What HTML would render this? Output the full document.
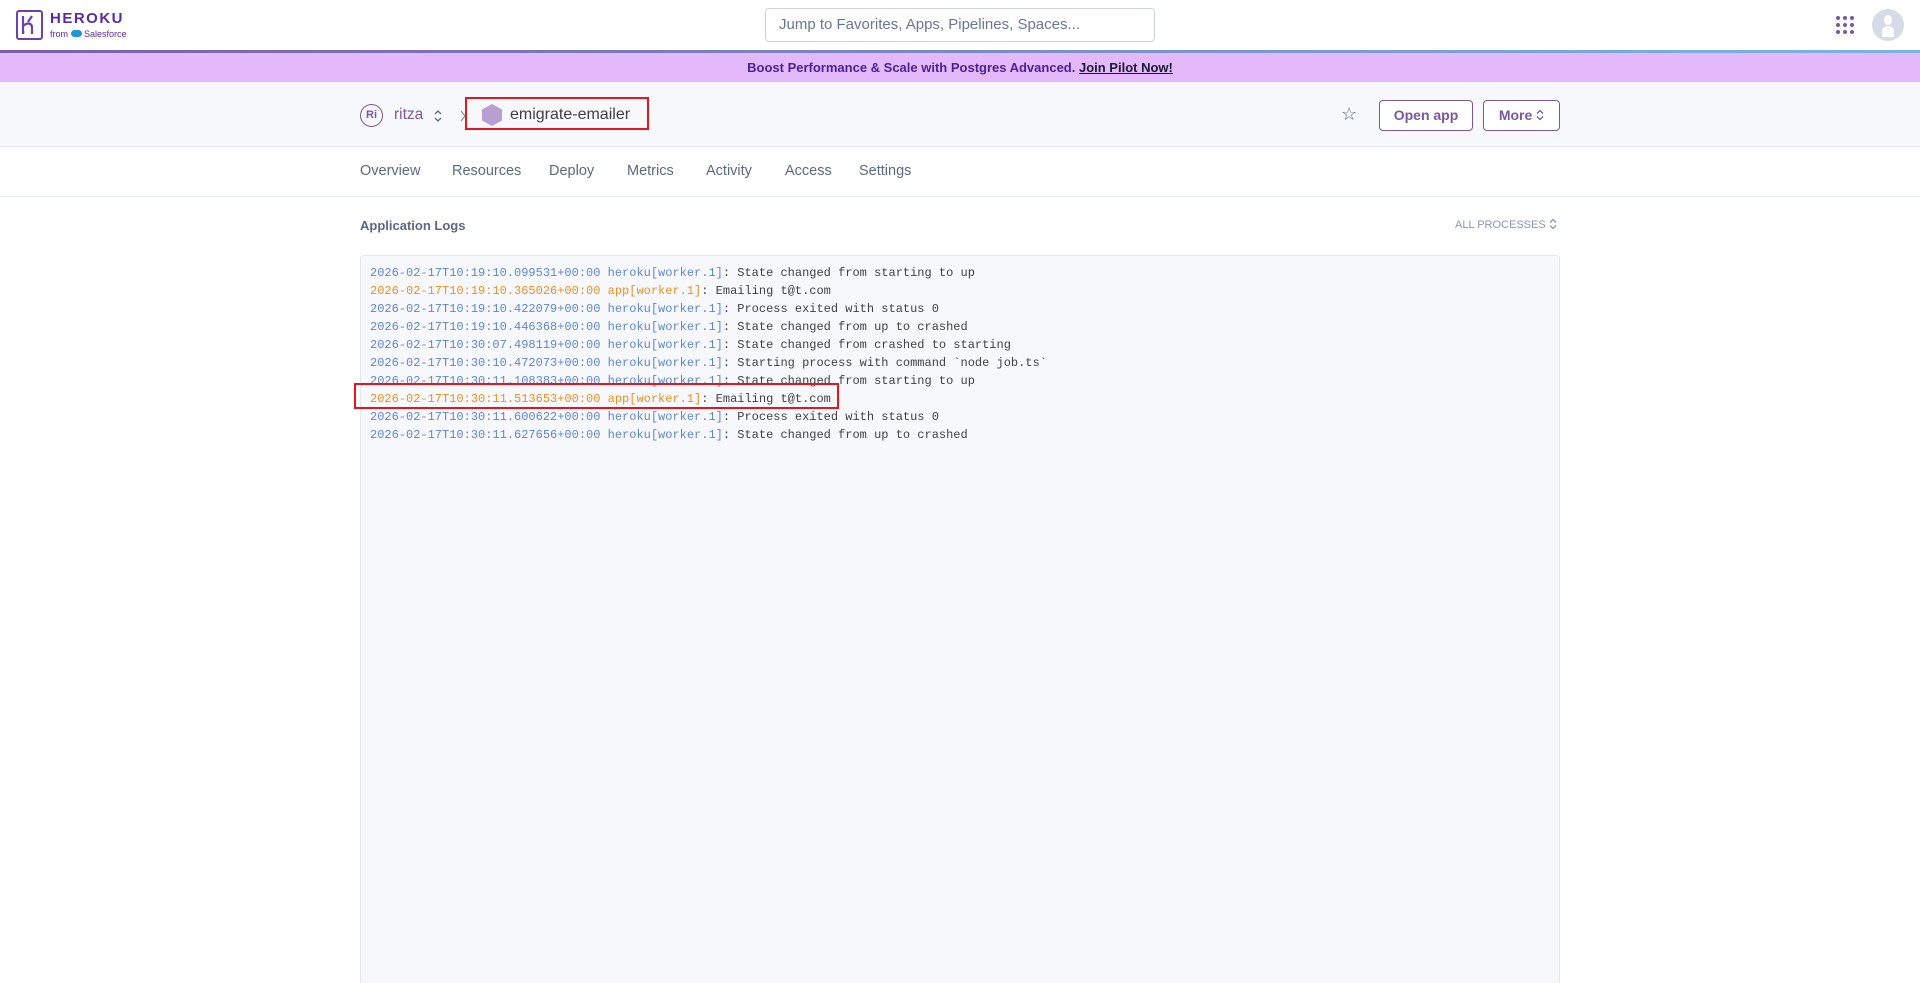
<!DOCTYPE html>
<html><head><meta charset="utf-8"><style>
*{box-sizing:border-box;margin:0;padding:0}
html{width:1920px;height:983px;overflow:hidden}
body{width:1920px;height:983px;overflow:hidden;background:#fff;font-family:"Liberation Sans",sans-serif;position:relative}
.abs{position:absolute}
.hdr{top:0;left:0;width:1920px;height:50px;background:#fff}
.grad{top:50px;left:0;width:1920px;height:3px;background:linear-gradient(90deg,#7b5ea7,#79b7e0)}
.banner{top:53px;left:0;width:1920px;height:29px;background:#e3b9fc;text-align:center;font-size:13px;font-weight:bold;color:#4b1f96;line-height:29px}
.banner u{color:#1a1a2e}
.apph{top:82px;left:0;width:1920px;height:65px;background:#f7f8fb;border-bottom:1px solid #e3e7ef}
.nav{top:147px;left:0;width:1920px;height:50px;border-bottom:1px solid #e3e7ef}
.tab{top:163px;font-size:14.5px;color:#596981}
.logline{font-family:"Liberation Mono",monospace;font-size:12px;color:#3f4148;white-space:pre;height:18px;line-height:18px}
.b{color:#5e86d6}.o{color:#ef8f1e}
.btn{top:100px;height:31px;border:1px solid #79589f;border-radius:4px;background:#fff;color:#79589f;font-size:14px;font-weight:bold;text-align:center;line-height:29px}
</style></head><body>
<div class="abs hdr"></div>
<div class="abs" style="left:16px;top:10px;width:27px;height:30px;border:2px solid #6b3fb5;border-radius:3px"></div>
<svg class="abs" style="left:16px;top:10px" width="27" height="30"><path d="M7 6v18M7 16c5-4 9-3 9 2v6M16 6l-4 6" stroke="#6b3fb5" stroke-width="2.2" fill="none"/><path d="M6 20l3 2-3 2z" fill="#6b3fb5"/></svg>
<div class="abs" style="left:50px;top:10px;font-size:15px;font-weight:bold;color:#5a2aa6;letter-spacing:1.5px">HEROKU</div>
<div class="abs" style="left:50px;top:29px;font-size:9px;color:#5a2aa6">from <span style="display:inline-block;width:11px;height:7px;background:#1b96d9;border-radius:4px"></span> Salesforce</div>
<div class="abs" style="left:765px;top:8px;width:390px;height:34px;border:1px solid #ccd3e0;border-radius:4px;font-size:15px;color:#69788e;padding-left:13px;line-height:32px">Jump to Favorites, Apps, Pipelines, Spaces...</div>
<svg class="abs" style="left:1835px;top:15px" width="20" height="20"><g fill="#79589f"><circle cx="3" cy="3" r="2"/><circle cx="10" cy="3" r="2"/><circle cx="17" cy="3" r="2"/><circle cx="3" cy="10" r="2"/><circle cx="10" cy="10" r="2"/><circle cx="17" cy="10" r="2"/><circle cx="3" cy="17" r="2"/><circle cx="10" cy="17" r="2"/><circle cx="17" cy="17" r="2"/></g></svg>
<div class="abs" style="left:1872px;top:9px;width:32px;height:32px;border-radius:50%;background:#d6dbe6"></div>
<svg class="abs" style="left:1872px;top:9px" width="32" height="32"><path d="M10 28v-6c0-3 3-5 6-5s6 2 6 5v6z M12 11c0-3 2-5 4-5s4 2 4 5-2 5-4 5-4-2-4-5z" fill="#fff"/></svg>
<div class="abs grad"></div>
<div class="abs banner">Boost Performance &amp; Scale with Postgres Advanced. <u>Join Pilot Now!</u></div>
<div class="abs apph"></div>
<div class="abs" style="left:360px;top:104px;width:23px;height:23px;border:1px solid #79589f;border-radius:50%;font-size:11px;font-weight:bold;color:#79589f;text-align:center;line-height:21px">Ri</div>
<div class="abs" style="left:394px;top:106px;font-size:15.5px;color:#79589f">ritza</div>
<svg class="abs" style="left:433px;top:109px" width="10" height="14"><path d="M2 5l3-3 3 3M2 9l3 3 3-3" stroke="#596981" stroke-width="1.3" fill="none"/></svg>
<svg class="abs" style="left:459px;top:110px" width="8" height="12"><path d="M2 1l4 5-4 5" stroke="#8a97aa" stroke-width="1.3" fill="none"/></svg>
<svg class="abs" style="left:481px;top:103px" width="22" height="24"><path d="M11 1l10 5.5v11L11 23 1 17.5v-11z" fill="#b79fcf"/></svg>
<div class="abs" style="left:510px;top:106px;font-size:16px;color:#3f3f44">emigrate-emailer</div>
<div class="abs" style="left:465px;top:97px;width:184px;height:33px;border:2px solid #e8141b"></div>
<div class="abs" style="left:1341px;top:104px;font-size:18px;color:#596981">☆</div>
<div class="abs btn" style="left:1379px;width:94px">Open app</div>
<div class="abs btn" style="left:1483px;width:77px">More <svg width="8" height="12" style="vertical-align:-1px"><path d="M1 4.5l3-3 3 3M1 7.5l3 3 3-3" stroke="#79589f" stroke-width="1.3" fill="none"/></svg></div>
<div class="abs nav"></div>
<div class="abs tab" style="left:360px">Overview</div>
<div class="abs tab" style="left:452px">Resources</div>
<div class="abs tab" style="left:549px">Deploy</div>
<div class="abs tab" style="left:627px">Metrics</div>
<div class="abs tab" style="left:706px">Activity</div>
<div class="abs tab" style="left:785px">Access</div>
<div class="abs tab" style="left:859px">Settings</div>
<div class="abs" style="left:360px;top:218px;font-size:13px;font-weight:bold;color:#596981">Application Logs</div>
<div class="abs" style="left:1455px;top:218px;font-size:11px;color:#8a97aa">ALL PROCESSES <svg width="8" height="12" style="vertical-align:-2px"><path d="M1 4.5l3-3 3 3M1 7.5l3 3 3-3" stroke="#8a97aa" stroke-width="1.3" fill="none"/></svg></div>
<div class="abs" style="left:360px;top:255px;width:1200px;height:728px;background:#f7f8fb;border:1px solid #e3e7ef;border-bottom:none;border-radius:3px 3px 0 0;padding:8px 0 0 9px">
<div class="logline"><span class="b">2026-02-17T10:19:10.099531+00:00 heroku[worker.1]</span>: State changed from starting to up</div>
<div class="logline"><span class="o">2026-02-17T10:19:10.365026+00:00 app[worker.1]</span>: Emailing t@t.com</div>
<div class="logline"><span class="b">2026-02-17T10:19:10.422079+00:00 heroku[worker.1]</span>: Process exited with status 0</div>
<div class="logline"><span class="b">2026-02-17T10:19:10.446368+00:00 heroku[worker.1]</span>: State changed from up to crashed</div>
<div class="logline"><span class="b">2026-02-17T10:30:07.498119+00:00 heroku[worker.1]</span>: State changed from crashed to starting</div>
<div class="logline"><span class="b">2026-02-17T10:30:10.472073+00:00 heroku[worker.1]</span>: Starting process with command `node job.ts`</div>
<div class="logline"><span class="b">2026-02-17T10:30:11.108383+00:00 heroku[worker.1]</span>: State changed from starting to up</div>
<div class="logline"><span class="o">2026-02-17T10:30:11.513653+00:00 app[worker.1]</span>: Emailing t@t.com</div>
<div class="logline"><span class="b">2026-02-17T10:30:11.600622+00:00 heroku[worker.1]</span>: Process exited with status 0</div>
<div class="logline"><span class="b">2026-02-17T10:30:11.627656+00:00 heroku[worker.1]</span>: State changed from up to crashed</div>
</div>
<div class="abs" style="left:354px;top:383px;width:485px;height:26px;border:2px solid #e8141b"></div>
</body></html>
